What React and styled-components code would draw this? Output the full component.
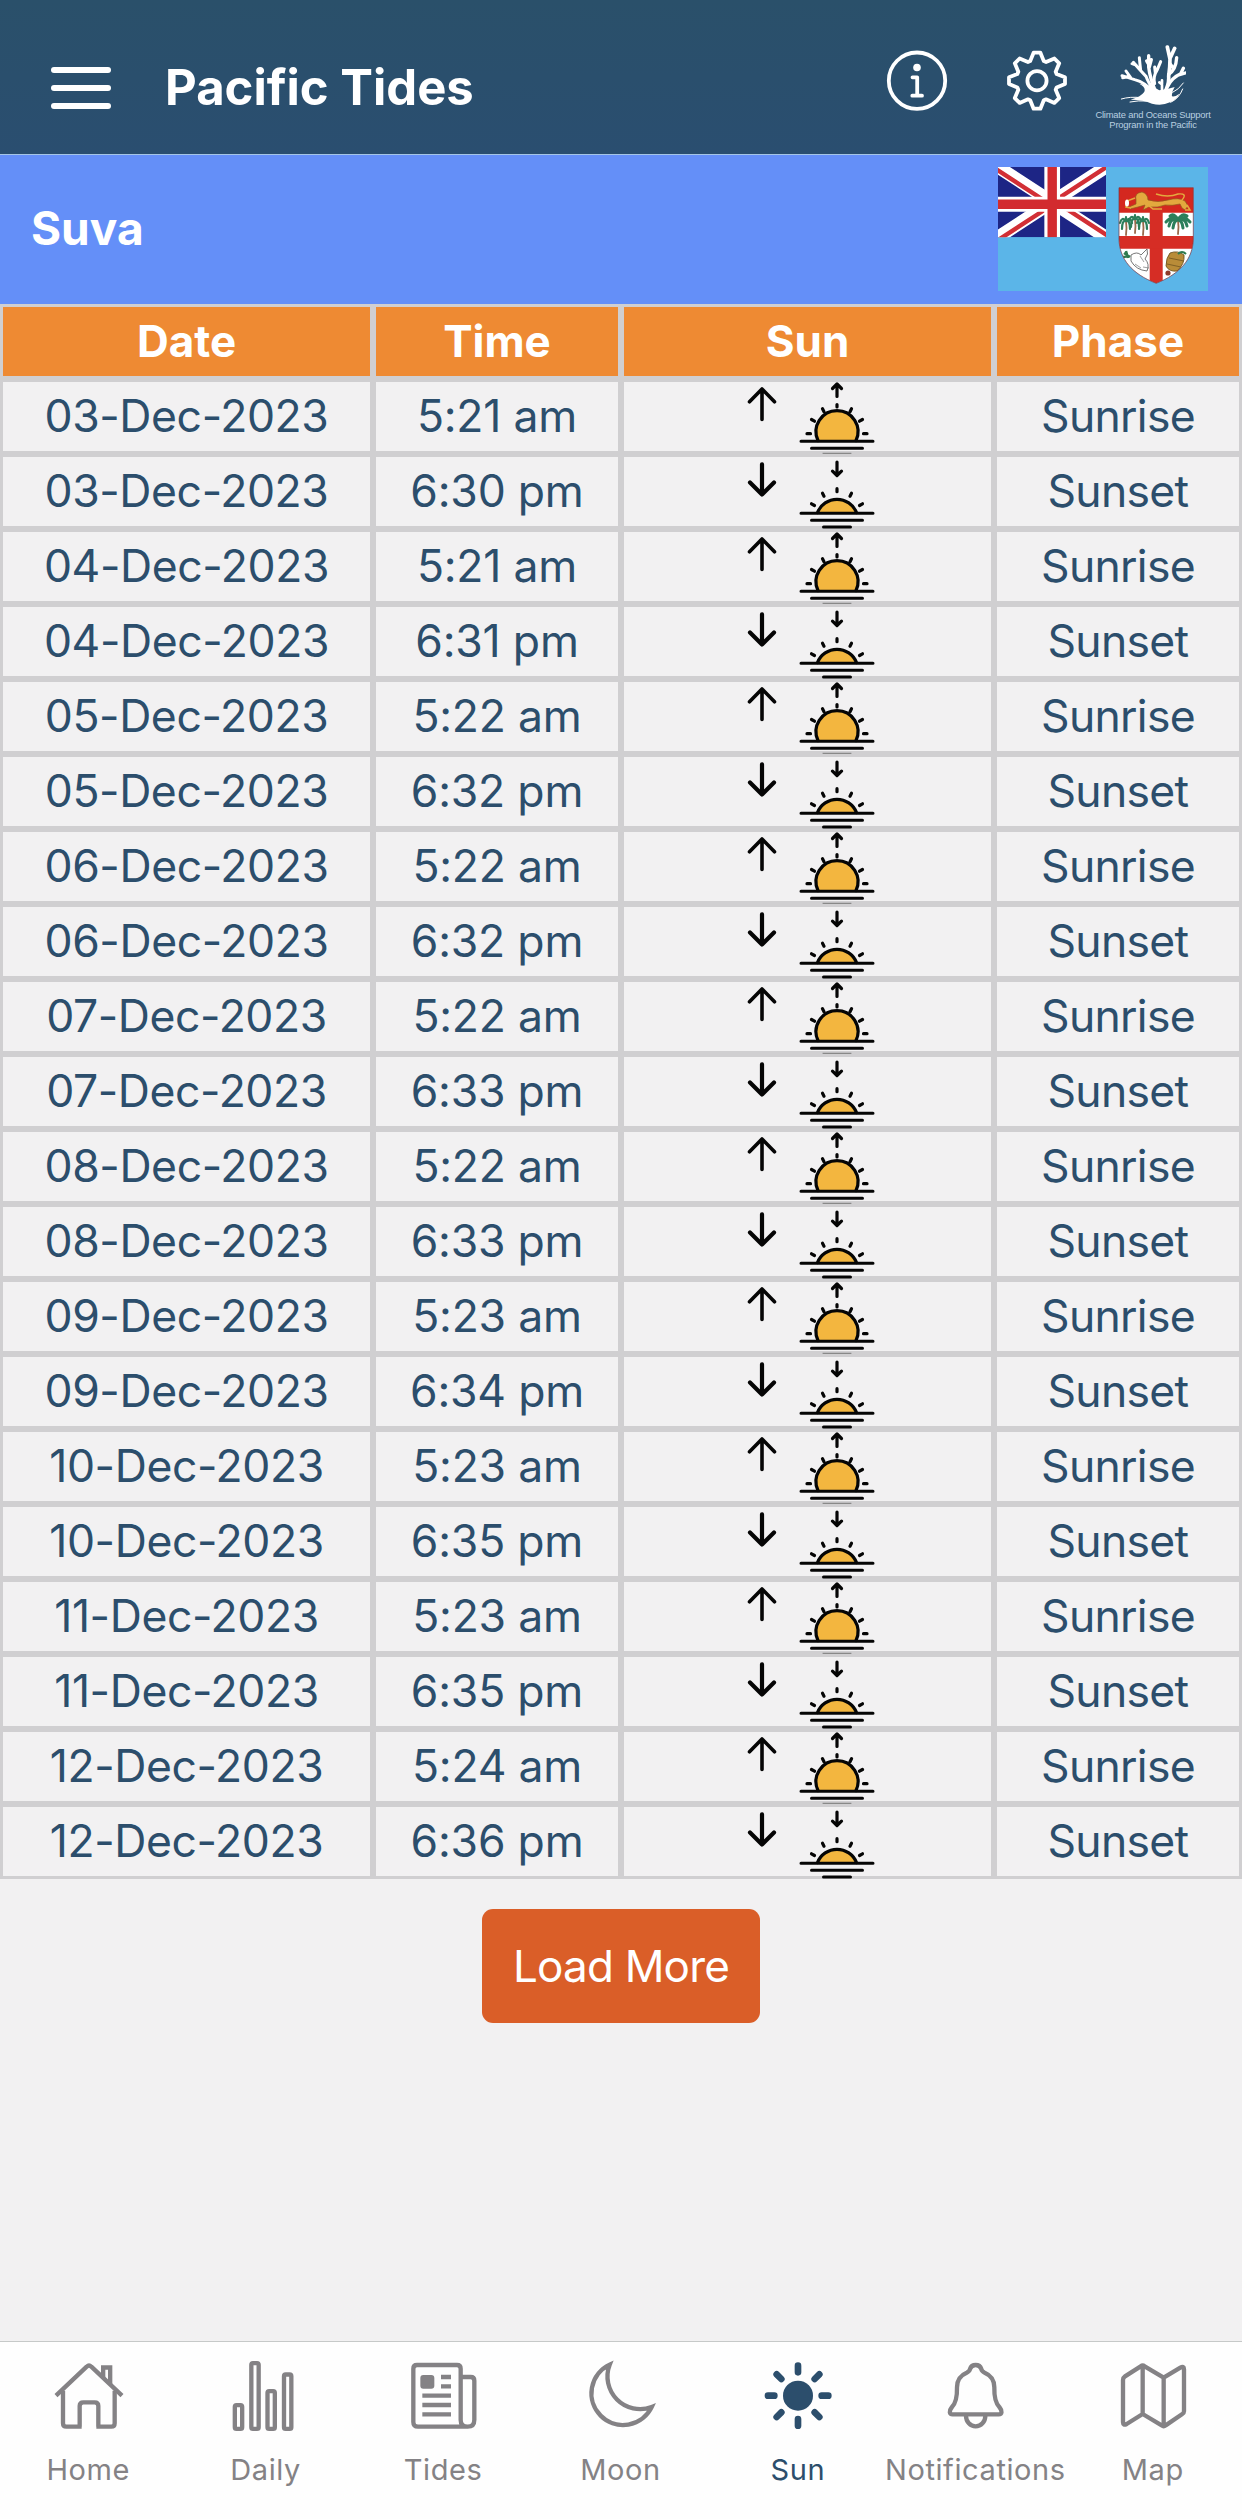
import styled, { createGlobalStyle } from "styled-components";

const GlobalStyle = createGlobalStyle`
  * {
    box-sizing: border-box;
  }
  body {
    margin: 0;
    background: #f2f1f2;
    font-family: Inter, "Liberation Sans", sans-serif;
  }
`;

const Screen = styled.div`
  display: flex;
  flex-direction: column;
  width: 1242px;
  height: 2519px;
  overflow: hidden;
`;

const Header = styled.header`
  display: flex;
  flex-shrink: 0;
  height: 155px;
  padding: 0 27px 0 51px;
  background: linear-gradient(#2a506a, #2a4e70);
  border-bottom: 1px solid #a5c5e6;
`;

const MenuButton = styled.button`
  display: flex;
  flex-direction: column;
  gap: 12px;
  width: 60px;
  margin: 67px 54px 0 0;
  padding: 0;
  border: none;
  background: none;
`;

const MenuBar = styled.span`
  height: 6px;
  border-radius: 3px;
  background: #fff;
`;

const Title = styled.h1`
  flex: 1;
  margin: 58px 0 0;
  color: #fff;
  font-size: 49px;
  line-height: 60px;
  font-weight: 700;
`;

const HeaderIcons = styled.div`
  display: flex;
  gap: 56px;
  margin: 49px 22px 0 0;
`;

const Partner = styled.div`
  display: flex;
  flex-direction: column;
  align-items: center;
  width: 124px;
  margin-top: 45px;
`;

const PartnerText = styled.span`
  margin-top: ${(props) => (props.$first ? "4px" : "0")};
  color: #b9cfe0;
  font-family: "Liberation Sans", sans-serif;
  font-size: 9.4px;
  line-height: 10px;
  letter-spacing: -0.2px;
  white-space: nowrap;
`;

const Location = styled.section`
  display: flex;
  justify-content: space-between;
  flex-shrink: 0;
  height: 149px;
  padding: 12px 34px 0 31px;
  background: #648ff8;
`;

const Place = styled.h2`
  margin: 31px 0 0;
  color: #fff;
  font-size: 46px;
  line-height: 60px;
  font-weight: 700;
`;

const Row = styled.div`
  display: grid;
  grid-template-columns: 373px 248px 373px 248px;
  height: 75px;
  flex-shrink: 0;
`;

const Cell = styled.div`
  display: flex;
  align-items: center;
  justify-content: center;
  padding-bottom: 1px;
  border: 3px solid #d0cfd1;
  color: #2c4e6c;
  font-size: 44.5px;
  line-height: 60px;
  letter-spacing: ${(props) => props.$spacing || "0"};
  white-space: nowrap;
`;

const HeadCell = styled(Cell)`
  background: #ee8a33;
  color: #fff;
  font-size: 44px;
  font-weight: 700;
`;

const SunCell = styled(Cell)`
  gap: 18px;
  padding: 0 0 0 5px;
`;

const CellIcon = styled.svg`
  flex-shrink: 0;
  height: 69px;
  overflow: visible;
  fill: none;
  stroke: #050505;
  stroke-linecap: round;
  stroke-linejoin: round;
`;

const LoadMore = styled.button`
  align-self: center;
  flex-shrink: 0;
  width: 278px;
  height: 114px;
  margin-top: 30px;
  padding: 0;
  border: none;
  border-radius: 11px;
  background: #da5e28;
  color: #fff;
  font-family: inherit;
  font-size: 44px;
  letter-spacing: -0.8px;
`;

const TabBar = styled.nav`
  display: grid;
  grid-template-columns: repeat(7, minmax(0, 1fr));
  height: 178px;
  margin-top: auto;
  flex-shrink: 0;
  background: #fefefe;
  border-top: 1px solid #c6c9c8;
`;

const Tab = styled.a`
  display: flex;
  flex-direction: column;
  align-items: center;
  padding-top: 18px;
  color: ${(props) => (props.$active ? "#2c4e6c" : "#848285")};
`;

const TabIcon = styled.svg`
  width: 72px;
  height: 72px;
  fill: none;
  stroke: currentColor;
  stroke-width: 13;
`;

const TabLabel = styled.span`
  margin-top: 18px;
  padding-right: 1px;
  font-size: 29px;
  line-height: 40px;
  letter-spacing: 0.6px;
  white-space: nowrap;
`;

// 8 teeth, each turned 45 degrees
const gearPath = () => {
  const points = [];
  for (let i = 0; i < 8; i++) {
    const a = (i * Math.PI) / 4;
    [
      [-6.8, -19.6],
      [-3.4, -28],
      [3.4, -28],
      [6.8, -19.6],
    ].forEach(([x, y]) => {
      const px = 31 + x * Math.cos(a) - y * Math.sin(a);
      const py = 31 + x * Math.sin(a) + y * Math.cos(a);
      points.push(`${px.toFixed(2)} ${py.toFixed(2)}`);
    });
  }
  return `M${points.join("L")}Z`;
};

const InfoIcon = () => (
  <svg width="64" height="64" viewBox="-1 0 64 64" fill="none" stroke="#fff" strokeWidth="3.8">
    <circle cx="31" cy="31.7" r="28.2" />
    <circle cx="31" cy="18.5" r="3.8" fill="#fff" stroke="none" />
    <path d="M26.5 28.3H31.2V46.7M26.3 46.7H36" strokeLinecap="round" strokeLinejoin="round" />
  </svg>
);

const GearIcon = () => (
  <svg width="64" height="64" viewBox="-1 -0.7 64 64" fill="none" stroke="#fff" strokeWidth="3.8">
    <path d={gearPath()} strokeLinejoin="round" />
    <circle cx="31" cy="31" r="9.6" />
  </svg>
);

const CoralLogo = () => (
  <svg width="66" height="61" viewBox="0 0 198 183" fill="none" stroke="#fff" strokeLinecap="round" strokeLinejoin="round">
    <path
      d="M58 116Q80 128 72 142Q62 156 32 164Q70 164 96 176Q125 184 150 172Q170 164 178 146Q166 156 156 154Q154 142 164 126L142 132L118 136L96 124Z"
      fill="#fff"
      stroke="none"
    />
    <path d="M100 142Q76 112 44 104L6 92M32 98L18 78M22 95L8 98" strokeWidth="9" />
    <path d="M104 140Q84 112 78 94Q62 78 40 52M62 76Q60 60 58 38M48 60L36 56" strokeWidth="9" />
    <path d="M106 138Q90 100 86 66L86 32M87 60L80 48M88 66L94 44" strokeWidth="10" />
    <path d="M104 116Q98 96 112 74L122 50M106 84L104 66" strokeWidth="9" />
    <path d="M132 146Q148 118 146 94Q150 66 150 42L142 6M151 38L164 10" strokeWidth="11" />
    <path d="M146 88Q168 74 170 38M160 70L150 56M144 122Q156 98 182 86L190 70M176 90L196 84" strokeWidth="10" />
    <path d="M126 144V106M126 118L118 112" strokeWidth="8" />
    <path d="M190 114Q176 134 158 142M188 132Q178 160 152 172M4 162Q30 154 64 158M30 171Q54 166 80 168" strokeWidth="3" />
  </svg>
);

const Palm = ({ x, y, wide }) => (
  <g transform={`translate(${x} ${y})`} fill="none" strokeLinecap="round">
    <path d="M0 3Q1 10 0 17" stroke="#9a6a4c" strokeWidth="1.8" />
    <path
      d={
        wide
          ? "M0 3Q-6 -2 -12 5M0 3Q-7 0 -9 9M0 3Q-4 3 -5 11M0 3Q6 -2 12 5M0 3Q7 0 9 9M0 3Q4 3 5 11M0 3Q-4 -5 -8 -1M0 3Q4 -5 9 -1"
          : "M0 3Q-4 -2 -6 5M0 3Q-4 2 -4 11M0 3Q4 -2 6 5M0 3Q4 2 4 11M0 3V-1"
      }
      stroke="#2c7f5b"
      strokeWidth={wide ? "3" : "2.2"}
    />
  </g>
);

const FijiFlag = () => (
  <svg width="210" height="124" viewBox="0 0 210 124">
    <defs>
      <clipPath id="canton">
        <path d="M0 0H108V70.3H0Z" />
      </clipPath>
      <clipPath id="shield">
        <path d="M121 20.7H195.3V72C195 92 182 107 158.2 116.3C134 107 121.3 92 121 72Z" />
      </clipPath>
    </defs>
    <path d="M0 0H210V124H0Z" fill="#5bb5e8" />
    <g clipPath="url(#canton)">
      <path d="M0 0H108V70.3H0Z" fill="#1d2585" />
      <path d="M0 0L108 70.3M108 0L0 70.3" stroke="#fff" strokeWidth="13" />
      <path d="M-2 2L54 38.5M110 -1L54 35.5M-2 74.5L54 38M110 69L54 32.5" stroke="#d22f35" strokeWidth="4.4" />
      <path d="M54.2 0V70.3" stroke="#fff" strokeWidth="15.7" />
      <path d="M0 37.2H108" stroke="#fff" strokeWidth="15" />
      <path d="M54.2 0V70.3M0 37.2H108" stroke="#d22b2f" strokeWidth="9.4" />
    </g>
    <g clipPath="url(#shield)">
      <path d="M121 20H196V117H121Z" fill="#fff" />
      <path d="M121 20H196V45.7H121Z" fill="#d4281f" />
      <path d="M158.2 40V117" stroke="#d62d25" strokeWidth="13" />
      <path d="M121 75.3H196" stroke="#d62d25" strokeWidth="12.7" />
      <path
        d="M138 33Q136 26 144 25Q150 27 150 33Q160 36 170 33Q181 30 187 34L190 39L187 43L184 41L182 37Q174 39 167 38Q160 41 151 40L145 43L147 38L140 40L132 42L131 40L138 37Z"
        fill="#e3a93e"
        stroke="#8f5a1c"
        strokeWidth="0.7"
      />
      <path d="M184 33Q190 26 180 27Q170 31 158 27" fill="none" stroke="#e3a93e" strokeWidth="1.5" />
      <path d="M137 31L129 34L128 40L133 41M189 38L192 43H187M150 38L155 42H164" fill="none" stroke="#e3a93e" strokeWidth="1.6" />
      <ellipse cx="129" cy="36" rx="2" ry="3.5" fill="#fff" />
      <Palm x={128} y={51} />
      <Palm x={137} y={49} />
      <Palm x={145} y={51} />
      <Palm x={180} y={50} wide />
      <path d="M133 88Q139 84 143 88L149 82Q151 87 147 92Q152 97 149 104Q138 103 133 94Z" fill="#fff" stroke="#666" strokeWidth="0.9" />
      <path d="M142 89L146 95M145 100L151 101M137 97L143 101" stroke="#777" strokeWidth="0.7" />
      <path d="M126 86L132 90M128 84L130 91M125 90L131 89" stroke="#2f7a4f" strokeWidth="2.5" />
      <path d="M172 86Q180 83 186 88Q187 97 179 104Q171 105 168 99Q168 91 172 86Z" fill="#b98c38" stroke="#6f5320" strokeWidth="0.9" />
      <path d="M171 91L186 94M169 97L183 100" stroke="#7b5b22" strokeWidth="0.9" />
      <path d="M180 87Q184 83 188 87" fill="none" stroke="#2f7a4f" strokeWidth="2" />
      <circle cx="170" cy="106" r="2.6" fill="#8e3b2b" />
    </g>
    <path d="M121 20.7H195.3V72C195 92 182 107 158.2 116.3C134 107 121.3 92 121 72Z" fill="none" stroke="#7a3540" strokeWidth="0.7" />
  </svg>
);

const Arrow = ({ up }) => (
  <CellIcon width="36" viewBox="0 0 36 69" strokeWidth={up ? 3.6 : 4.2}>
    <path d={up ? "M18 37.5V7.5M5.5 19.8L18 7L30.5 19.8" : "M18 7.3V37.5M6 25.5L18 37.5L30 25.5"} />
  </CellIcon>
);

const SunriseIcon = () => (
  <CellIcon width="78" viewBox="0 0 78 69" strokeWidth="3.2">
    <path d="M20 58.5A21 21 0 1 1 58 58.5" fill="#f3b63f" />
    <path d="M39 14.5V2.5M34.5 6.5L39 2L43.5 6.5M39 22.5V25" />
    <path d="M24.5 26.7L26 29.7M53.5 26.7L52 29.7M13.5 37.5L16.5 39.2M64.5 37.5L61.5 39.2M9 51.7H12.5M69 51.7H65.5" />
    <path d="M3 59.2H75M13.5 66.3H64.5" strokeWidth="3" />
    <path d="M25 71.3H53" strokeWidth="1" stroke="#777" />
  </CellIcon>
);

const SunsetIcon = () => (
  <CellIcon width="78" viewBox="0 0 78 69" strokeWidth="3.2">
    <path d="M19.5 55.5A21 21 0 0 1 58.5 55.5" fill="#f3b63f" />
    <path d="M39 5V18M34.5 14.2L39 18.5L43.5 14.2M39 31.7V34.7" />
    <path d="M24.5 36.2L26 39.2M53.5 36.2L52 39.2M13.5 46.8L16.5 48.5M64.5 46.8L61.5 48.5" />
    <path d="M3 56.2H75M13.5 63.3H64.5M25.5 70H52.5" strokeWidth="3" />
  </CellIcon>
);

const tabs = [
  {
    text: "Home",
    icon: (
      <>
        <path d="M9 107L101 20Q108 13 115 20L207 107" />
        <path d="M30 92V190Q30 200 40 200H86M80 200V138Q80 127 91 127H125Q136 127 136 138V200M130 200H175Q185 200 185 190V92" />
        <path d="M150.5 54V22.5H171.5V72" />
      </>
    ),
  },
  {
    text: "Daily",
    icon: (
      <>
        <rect x="14.5" y="135.5" width="22" height="71" rx="5" />
        <rect x="64" y="9.5" width="22" height="197" rx="5" />
        <rect x="112.5" y="93.5" width="22" height="113" rx="5" />
        <rect x="162" y="43.5" width="22" height="163" rx="5" />
      </>
    ),
  },
  {
    text: "Tides",
    icon: (
      <>
        <path d="M182 200H30Q16 200 16 186V26Q16 15 27 15H147Q158 15 158 26V180Q158 200 179 200Q199 200 199 179V62Q199 51 188 51H158" />
        <path d="M43 107H129M43 135H129M43 163H129M99 51H129M99 79H129" />
        <rect x="37" y="45" width="42" height="41" rx="9" fill="currentColor" stroke="none" />
      </>
    ),
  },
  {
    text: "Moon",
    icon: <path d="M74 14A95 95 0 1 0 200 141A98 98 0 0 1 74 14Z" />,
  },
  {
    text: "Sun",
    active: true,
    icon: (
      <>
        <circle cx="108" cy="107" r="45" fill="currentColor" stroke="none" />
        <path
          d="M108 17V37M108 177V197M18 107H37M179 107H199M44 43L58 57M158 157L172 171M44 171L58 157M158 57L172 43"
          strokeWidth="20"
          strokeLinecap="round"
        />
      </>
    ),
  },
  {
    text: "Notifications",
    icon: (
      <>
        <path
          d="M107 15Q94 15 90 27Q89 34 80 38Q51 50 51 82Q52 124 36 141C26 153 28 163 38 163H176C186 163 188 153 178 141Q162 124 163 82Q163 50 134 38Q125 34 124 27Q120 15 107 15Z"
          strokeLinejoin="round"
        />
        <path d="M78 168A29 31 0 0 0 136 168" />
      </>
    ),
  },
  {
    text: "Map",
    icon: (
      <path
        d="M18 60Q18 53 24 49L71 19Q77 14 83 19L140 53L190 23Q201 17 201 28V154Q201 159 196 162L146 196Q140 201 134 196L77 162L29 192Q18 198 18 187ZM77 17V162M140 53V198"
        strokeLinejoin="round"
      />
    ),
  },
];

const days = [
  ["03", "5:21", "6:30"],
  ["04", "5:21", "6:31"],
  ["05", "5:22", "6:32"],
  ["06", "5:22", "6:32"],
  ["07", "5:22", "6:33"],
  ["08", "5:22", "6:33"],
  ["09", "5:23", "6:34"],
  ["10", "5:23", "6:35"],
  ["11", "5:23", "6:35"],
  ["12", "5:24", "6:36"],
];

const rows = days.flatMap(([day, rise, set]) => [
  { date: `${day}-Dec-2023`, time: `${rise} am`, rise: true },
  { date: `${day}-Dec-2023`, time: `${set} pm`, rise: false },
]);

const App = () => (
  <Screen>
    <GlobalStyle />
    <Header>
      <MenuButton aria-label="Menu">
        <MenuBar />
        <MenuBar />
        <MenuBar />
      </MenuButton>
      <Title>Pacific Tides</Title>
      <HeaderIcons>
        <InfoIcon />
        <GearIcon />
      </HeaderIcons>
      <Partner>
        <CoralLogo />
        <PartnerText $first>Climate and Oceans Support</PartnerText>
        <PartnerText>Program in the Pacific</PartnerText>
      </Partner>
    </Header>

    <Location>
      <Place>Suva</Place>
      <FijiFlag />
    </Location>

    {/* sun table */}
    <Row>
      <HeadCell>Date</HeadCell>
      <HeadCell>Time</HeadCell>
      <HeadCell>Sun</HeadCell>
      <HeadCell>Phase</HeadCell>
    </Row>
    {rows.map((row, i) => (
      <Row key={i}>
        <Cell $spacing="-0.4px">{row.date}</Cell>
        <Cell $spacing="-0.2px">{row.time}</Cell>
        <SunCell>
          <Arrow up={row.rise} />
          {row.rise ? <SunriseIcon /> : <SunsetIcon />}
        </SunCell>
        <Cell $spacing="-0.7px">{row.rise ? "Sunrise" : "Sunset"}</Cell>
      </Row>
    ))}

    <LoadMore>Load More</LoadMore>

    {/* bottom tabs */}
    <TabBar>
      {tabs.map((tab) => (
        <Tab key={tab.text} $active={tab.active}>
          <TabIcon viewBox="0 0 216 216">{tab.icon}</TabIcon>
          <TabLabel>{tab.text}</TabLabel>
        </Tab>
      ))}
    </TabBar>
  </Screen>
);

export default App;
